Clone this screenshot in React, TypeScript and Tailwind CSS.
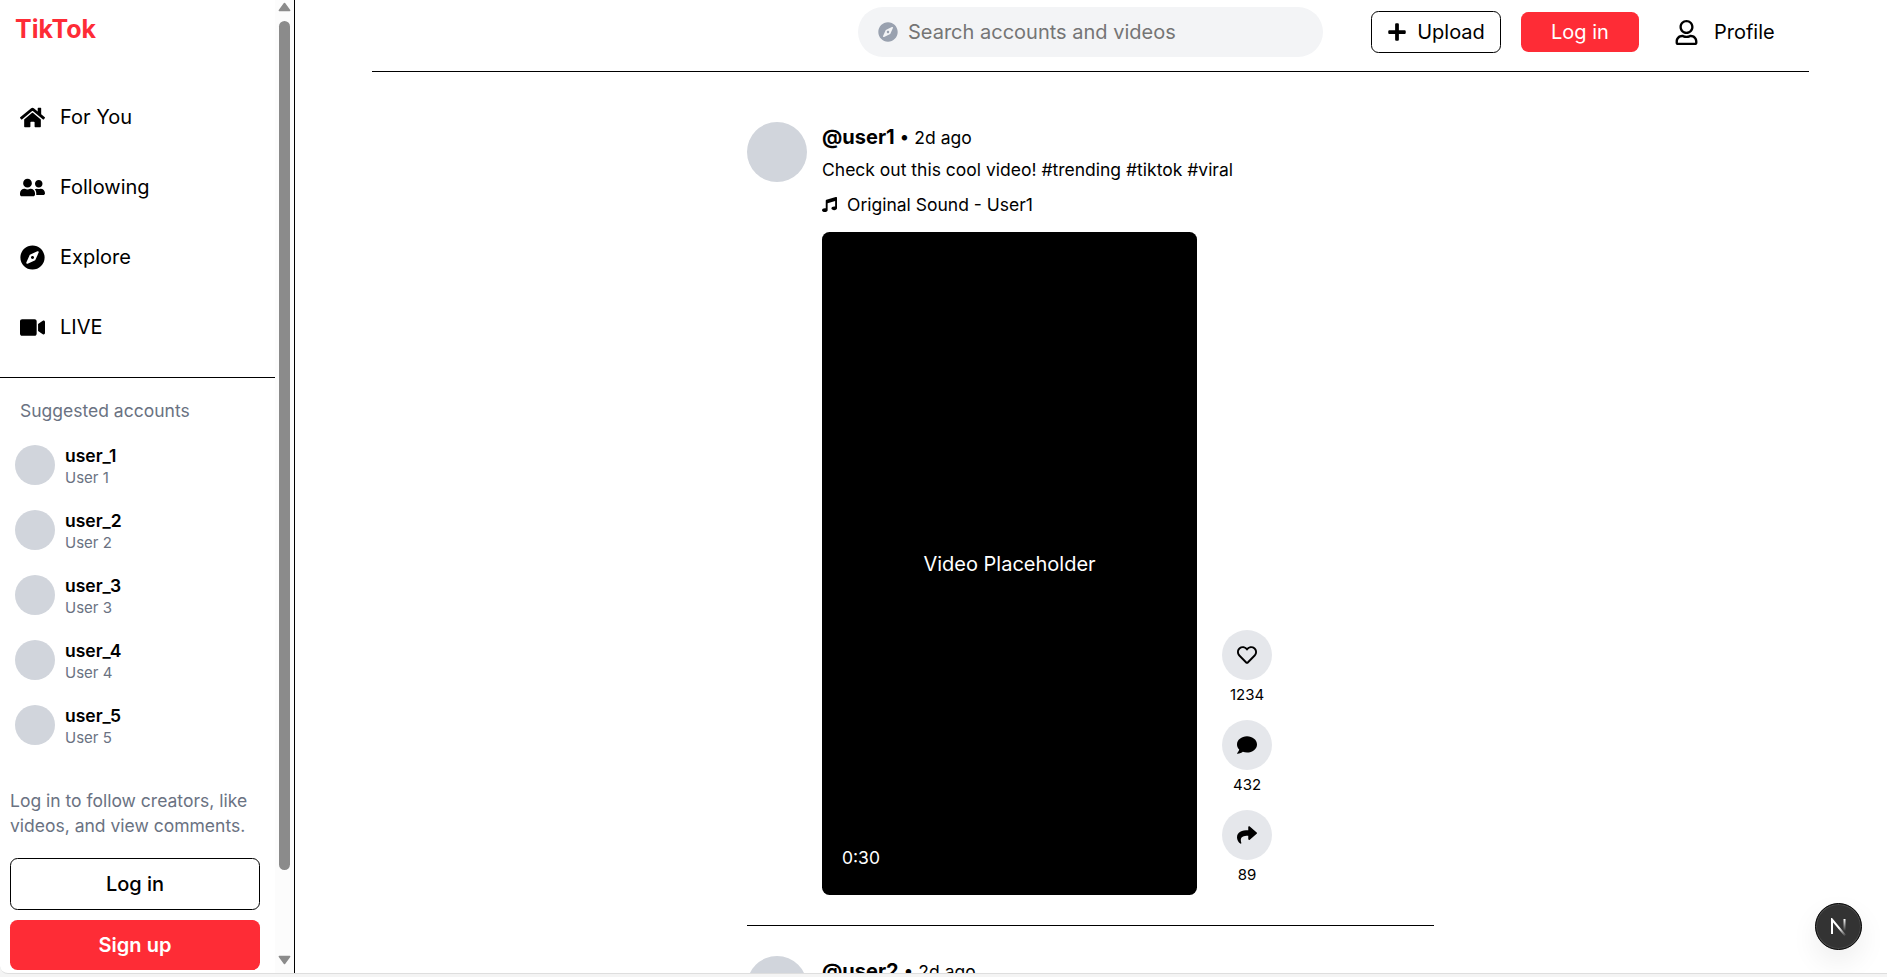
import { ReactNode } from "react";
import {
  FaComment,
  FaCompass,
  FaHome,
  FaMusic,
  FaPlus,
  FaRegHeart,
  FaRegUser,
  FaShare,
  FaUserFriends,
  FaVideo,
} from "react-icons/fa";

const nav = [
  { label: "For You", Icon: FaHome },
  { label: "Following", Icon: FaUserFriends },
  { label: "Explore", Icon: FaCompass },
  { label: "LIVE", Icon: FaVideo },
];

const accounts = [1, 2, 3, 4, 5];

function Scrollbar() {
  return (
    <div className="flex w-[19px] shrink-0 flex-col items-center bg-[#fcfcfc] pt-[2px] pb-[8px]">
      <svg width="13" height="10" viewBox="0 0 13 10" className="shrink-0">
        <path d="M6.5 1.6 11.6 8.4H1.4Z" fill="#8b8b8b" stroke="#8b8b8b" strokeWidth="1.6" strokeLinejoin="round" />
      </svg>
      <div className="mt-[9px] h-[849px] w-[11px] shrink-0 rounded-full bg-[#8b8b8b]" />
      <svg width="13" height="10" viewBox="0 0 13 10" className="mt-auto shrink-0">
        <path d="M6.5 8.4 11.6 1.6H1.4Z" fill="#8b8b8b" stroke="#8b8b8b" strokeWidth="1.6" strokeLinejoin="round" />
      </svg>
    </div>
  );
}

function Sidebar() {
  return (
    <aside className="flex h-full w-[295px] shrink-0 border-r border-black">
      <div className="w-[275px] shrink-0 overflow-hidden">
        <h1 className="px-[15px] pt-[12px] text-[25px] leading-[34px] font-bold text-[#fe2c36]">TikTok</h1>
        <nav className="mt-[36px] flex flex-col">
          {nav.map(({ label, Icon }) => (
            <a key={label} className="flex h-[70px] items-center gap-[15px] px-5">
              <Icon size={25} />
              <span>{label}</span>
            </a>
          ))}
        </nav>
        <hr className="mt-[15px] border-black" />
        <p className="mt-[20px] px-5 text-[17.5px] leading-[25px] text-[#6a7282]">Suggested accounts</p>
        <ul className="mt-[10px]">
          {accounts.map((n) => (
            <li key={n} className="flex h-[65px] items-start gap-2.5 px-[15px] pt-[10px]">
              <span className="mt-[2px] size-10 rounded-full bg-[#d1d5dc]" />
              <div>
                <p className="text-[17.5px] leading-[25px] font-semibold">user_{n}</p>
                <p className="text-[15px] leading-5 text-[#6a7282]">User {n}</p>
              </div>
            </li>
          ))}
        </ul>
        <div className="px-2.5 pt-[30px]">
          <p className="text-[17.5px] leading-[25px] text-[#6a7282]">
            Log in to follow creators, like
            <br />
            videos, and view comments.
          </p>
          <button className="mt-5 block h-[52px] w-[250px] rounded-[7.5px] border border-black font-medium">Log in</button>
          <button className="mt-2.5 block h-[50px] w-[250px] rounded-[7.5px] bg-[#fe2c36] font-semibold text-white">
            Sign up
          </button>
        </div>
      </div>
      <Scrollbar />
    </aside>
  );
}

function Header() {
  return (
    <header className="ml-[77px] flex h-[72px] w-[1437px] justify-end border-b border-black pt-[7px] pr-[35px]">
      <div className="flex h-[50px] w-[465px] items-center gap-2.5 rounded-full bg-[#f3f4f6] px-5 text-[#757575]">
        <FaCompass size={20} className="text-[#99a1af]" />
        <span>Search accounts and videos</span>
      </div>
      <div className="ml-12 flex h-[50px] items-center">
        <button className="flex h-[42px] w-[130px] items-center justify-center gap-2.5 rounded-[7.5px] border border-black">
          <FaPlus size={20} />
          Upload
        </button>
        <button className="ml-5 h-10 w-[118px] rounded-[7.5px] bg-[#fe2c36] text-white">Log in</button>
        <div className="ml-[35px] flex w-[100px] items-center gap-[15px] whitespace-nowrap">
          <FaRegUser size={25} className="shrink-0" />
          Profile
        </div>
      </div>
    </header>
  );
}

function Action({ icon, count }: { icon: ReactNode; count: number }) {
  return (
    <div className="flex h-[75px] w-[50px] flex-col items-center">
      <span className="flex size-[50px] shrink-0 items-center justify-center rounded-full bg-[#e5e7eb]">{icon}</span>
      <span className="mt-[5px] text-[15px] leading-5">{count}</span>
    </div>
  );
}

function Post({ user }: { user: string }) {
  return (
    <article className="flex h-[804px] w-[687px] shrink-0 gap-[15px] border-b border-black">
      <span className="size-[60px] shrink-0 rounded-full bg-[#d1d5dc]" />
      <div>
        <p className="h-[30px] leading-[30px]">
          <span className="font-bold">@{user}</span>
          <span className="text-[17.5px]"> • 2d ago</span>
        </p>
        <p className="mt-[5px] text-[17.5px] leading-[25px]">Check out this cool video! #trending #tiktok #viral</p>
        <p className="mt-[10px] flex items-center gap-2.5 text-[17.5px] leading-[25px]">
          <FaMusic size={15} />
          Original Sound - User1
        </p>
        <div className="mt-[15px] flex items-end gap-[25px]">
          <div className="relative flex h-[663px] w-[375px] items-center justify-center rounded-[7.5px] bg-black text-white">
            Video Placeholder
            <span className="absolute bottom-[25px] left-5 text-[17.5px] leading-[25px]">0:30</span>
          </div>
          <div className="flex flex-col gap-[15px] pb-[10px]">
            <Action icon={<FaRegHeart size={20} />} count={1234} />
            <Action icon={<FaComment size={20} />} count={432} />
            <Action icon={<FaShare size={20} />} count={89} />
          </div>
        </div>
      </div>
    </article>
  );
}

function DevBadge() {
  return (
    <div className="absolute right-[25px] bottom-[23px] flex size-[47px] items-center justify-center rounded-full border border-black bg-[#333] shadow-[0_12px_28px_rgba(0,0,0,0.07),inset_0_0_0_1px_#4a4a4a]">
      <svg width="17" height="18" viewBox="0 0 17 18" fill="none">
        <defs>
          <linearGradient id="stem" x1="0" y1="1" x2="0" y2="13" gradientUnits="userSpaceOnUse">
            <stop stopColor="#fff" />
            <stop offset="1" stopColor="#fff" stopOpacity="0" />
          </linearGradient>
          <linearGradient id="slash" x1="9" y1="10" x2="16" y2="18" gradientUnits="userSpaceOnUse">
            <stop stopColor="#fff" />
            <stop offset="1" stopColor="#fff" stopOpacity="0" />
          </linearGradient>
        </defs>
        <path d="M2 16V1.5L15.2 17.5" stroke="url(#slash)" strokeWidth="2" />
        <path d="M14.5 1V13" stroke="url(#stem)" strokeWidth="2" />
      </svg>
    </div>
  );
}

export default function App() {
  return (
    <div className="h-[977px] w-[1887px] overflow-hidden bg-[#f4f4f4] font-[Inter,sans-serif] text-[20px] leading-[30px] text-black">
      <div className="relative flex h-[974px] overflow-hidden rounded-bl-[8px] border-b border-[#dedede] bg-white">
        <Sidebar />
        <main className="h-full min-w-0 flex-1 overflow-hidden">
          <Header />
          <div className="ml-[452px] flex flex-col gap-[30px] pt-[50px]">
            <Post user="user1" />
            <Post user="user2" />
          </div>
        </main>
        <DevBadge />
      </div>
    </div>
  );
}
